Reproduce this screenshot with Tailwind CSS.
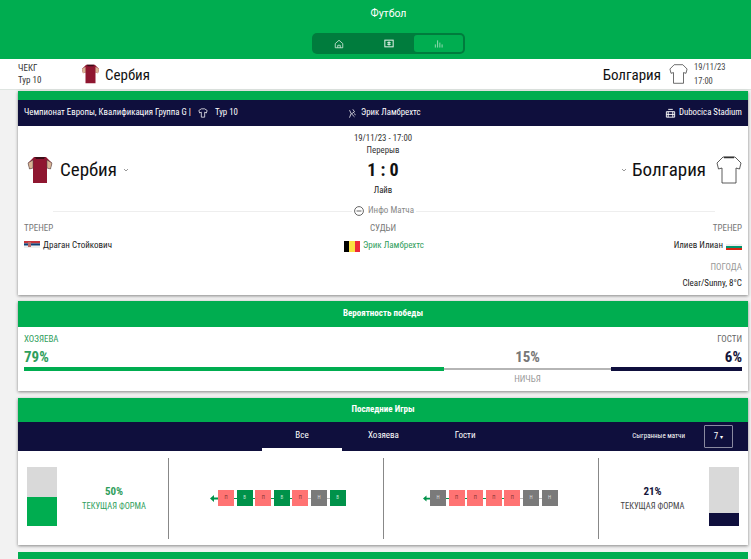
<!DOCTYPE html>
<html lang="ru">
<head>
    <meta charset="UTF-8">
    <meta name="viewport" content="width=device-width, initial-scale=1.0">
    <title>Футбол</title>
    <script src="https://cdn.jsdelivr.net/npm/@tailwindcss/browser@4"></script>
</head>
<body class="bg-[#f2f2f2] font-['Roboto',sans-serif] [font-stretch:75%] text-[#15153a] h-[559px] overflow-hidden">
    <!-- top bar -->
    <header class="bg-[#00ad50] h-[59px] flex flex-col items-center pl-[26px]">
        <div class="text-white text-[10.5px] [font-stretch:100%] leading-none mt-2 h-[25px] flex items-start pt-[1px]">Футбол</div>
        <nav class="w-[153px] h-[21px] bg-[#007c3d] rounded-[5px] flex items-center pl-[2px] pr-[2px]">
            <div class="w-[50px] flex justify-center">
                <svg width="10" height="10" viewBox="0 0 12 12" fill="none" stroke="#cfe9da" stroke-width="1"><path d="M1.5 5.5 6 1.5l4.500 4v5h-9z"/><path d="M4.500 10.500V7.500h3v3"/></svg>
            </div>
            <div class="w-[50px] flex justify-center">
                <svg width="10" height="9" viewBox="0 0 12 10" fill="none" stroke="#e3f3ea" stroke-width="1.2"><rect x="1" y="1" width="10" height="8"/><path d="M6 2.500v5M4 4h4M4 6h4"/></svg>
            </div>
            <div class="w-[49px] h-[17px] bg-[#00ad50] rounded-[3px] flex justify-center items-center">
                <svg width="9" height="9" viewBox="0 0 10 10" stroke="#9fdcb9" stroke-width="1"><path d="M1.500 9.500V6M4 9.500V1.500M6.500 9.500V4M9 9.500V6"/></svg>
            </div>
        </nav>
    </header>

    <!-- match strip -->
    <section class="bg-white h-[31px] flex items-center px-[18px] border-b border-[#dfe5e1]">
        <div class="w-[63px] text-[9px] leading-[12px] text-[#333]">
            <div>ЧЕКГ</div>
            <div>Тур 10</div>
        </div>
        <svg width="19" height="20" viewBox="0 0 26 28">
            <path d="M7 1h12l6 6-1.500 6-3.500-1v15H6V12l-3.500 1L1 7z" fill="#8f1630"/>
            <path d="M1 7l5-3v8l-3.500 1zM25 7l-5-3v8l3.500 1z" fill="#d9b596"/>
            <path d="M8 1h10l-1 2H9z" fill="#3a0d18"/>
        </svg>
        <div class="ml-[5px] pt-[2px] text-[15px] text-[#111]">Сербия</div>
        <div class="ml-auto pt-[2px] text-[15px] text-[#111]">Болгария</div>
        <svg class="ml-[8px]" width="19" height="20" viewBox="0 0 26 28" fill="#fff" stroke="#333" stroke-width="1">
            <path d="M7 1h12l6 6-1.500 6-3.500-1v15H6V12l-3.500 1L1 7z"/>
        </svg>
        <div class="ml-[6px] w-[39px] text-[8.500px] leading-[14px] text-[#444]">
            <div>19/11/23</div>
            <div>17:00</div>
        </div>
    </section>

    <main class="ml-[18px] w-[730px]">
        <!-- match card -->
        <section class="bg-white shadow-[0_1px_3px_rgba(0,0,0,0.45)] h-[204px] mt-[1px]">
            <div class="h-[9px] bg-[#00ad50]"></div>
            <div class="h-[26px] bg-[#0f0f3d] text-white text-[8.800px] flex items-center px-[6px]">
                <div class="w-[323px] flex items-center">
                    <span>Чемпионат Европы, Квалификация Группа G |</span>
                    <svg class="ml-[7px]" width="10" height="10" viewBox="0 0 12 12" fill="none" stroke="#fff" stroke-width="0.9"><path d="M4 1h4l3 2-1 3-2-1v6H4V5L2 6 1 3z"/></svg>
                    <span class="ml-[7px]">Тур 10</span>
                </div>
                <svg width="10" height="11" viewBox="0 0 12 12" fill="none" stroke="#fff" stroke-width="0.9"><path d="M3 11 5 6 3 2M5 6l4 4M7 1l2 3-3 2M9 6l1 2"/></svg>
                <span class="ml-[4px]">Эрик Ламбрехтс</span>
                <svg class="ml-auto" width="11" height="11" viewBox="0 0 12 12" fill="none" stroke="#fff" stroke-width="1"><path d="M1.500 4h9v6h-9zM1.500 7h9M3.500 1.500h5M3.500 4v6M8.500 4v6"/></svg>
                <span class="ml-[3px]">Dubocica Stadium</span>
            </div>

            <div class="relative h-[80px] flex items-center justify-between pl-[9px] pr-[6px]">
                <div class="flex items-center mt-[8px]">
                    <svg width="26" height="28" viewBox="0 0 26 28">
                        <path d="M7 1h12l6 6-1.500 6-3.500-1v15H6V12l-3.500 1L1 7z" fill="#8f1630"/>
                        <path d="M1 7l5-3v8l-3.500 1zM25 7l-5-3v8l3.500 1z" fill="#d9b596" stroke="#444" stroke-width="0.5"/>
                        <path d="M8 1h10l-1 2H9z" fill="#3a0d18"/>
                    </svg>
                    <span class="ml-[7px] text-[19px] text-[#111]">Сербия</span>
                    <svg class="ml-[6px]" width="6" height="4" viewBox="0 0 6 4" fill="none" stroke="#999"><path d="m1 1 2 2 2-2"/></svg>
                </div>
                <div class="absolute left-1/2 -translate-x-1/2 top-[6px] flex flex-col items-center whitespace-nowrap">
                    <div class="text-[8.800px] leading-[12px] text-[#333]">19/11/23 - 17:00</div>
                    <div class="text-[8.800px] leading-[12px] text-[#333]">Перерыв</div>
                    <div class="text-[18px] leading-[28px] font-bold text-[#111]">1 : 0</div>
                    <div class="text-[8.800px] leading-[12px] text-[#222]">Лайв</div>
                </div>
                <div class="flex items-center mt-[8px]">
                    <svg width="6" height="4" viewBox="0 0 6 4" fill="none" stroke="#999"><path d="m1 1 2 2 2-2"/></svg>
                    <span class="ml-[5px] text-[19px] text-[#111]">Болгария</span>
                    <svg class="ml-[10px]" width="26" height="28" viewBox="0 0 26 28" fill="#fff" stroke="#333" stroke-width="0.8">
                        <path d="M7 1h12l6 6-1.500 6-3.500-1v15H6V12l-3.500 1L1 7z"/>
                        <path d="M8 1.500h10" stroke-width="1.500"/>
                    </svg>
                </div>
            </div>

            <div class="flex items-center ml-[35px] mr-[33px] h-[10px]">
                <div class="flex-1 h-px bg-[#eeeeee]"></div>
                <svg class="mx-[2px]" width="10" height="10" viewBox="0 0 10 10" fill="none" stroke="#555" stroke-width="0.9"><circle cx="5" cy="5" r="4.400"/><path d="M2.500 5h5"/></svg>
                <span class="mx-[2px] text-[9px] text-[#888]">Инфо Матча</span>
                <div class="flex-1 h-px bg-[#eeeeee]"></div>
            </div>

            <div class="relative grid grid-cols-3 px-[6px] mt-[6px] text-[9px]">
                <div>
                    <div class="text-[#777] leading-[12px]">ТРЕНЕР</div>
                    <div class="mt-[6px] flex items-center h-[12px]">
                        <svg class="mb-[3px]" width="16" height="7" viewBox="0 0 16 7">
                            <rect width="16" height="2.400" fill="#c6363c"/>
                            <rect y="2.400" width="16" height="2.300" fill="#0c4076"/>
                            <rect y="4.700" width="16" height="2.300" fill="#eee"/>
                            <rect x="4" y="1" width="3" height="5" fill="#b86a6a"/>
                        </svg>
                        <span class="ml-[3px] text-[#222]">Драган Стойкович</span>
                    </div>
                </div>
                <div class="flex flex-col items-center">
                    <div class="text-[#777] leading-[12px]">СУДЬИ</div>
                    <div class="mt-[6px] flex items-center h-[12px] ml-[2px]">
                        <div class="w-[16px] h-[11px] flex">
                            <div class="flex-1 bg-black"></div>
                            <div class="flex-1 bg-[#fae042]"></div>
                            <div class="flex-1 bg-[#ed2939]"></div>
                        </div>
                        <span class="ml-[3px] text-[#2f9e5c]">Эрик Ламбрехтс</span>
                    </div>
                </div>
                <div class="flex flex-col items-end">
                    <div class="text-[#777] leading-[12px]">ТРЕНЕР</div>
                    <div class="mt-[6px] flex items-center h-[12px]">
                        <span class="mr-[3px] text-[#222]">Илиев Илиан</span>
                        <div class="w-[16px] h-[7px] flex flex-col mt-[2px]">
                            <div class="flex-1 bg-[#eee]"></div>
                            <div class="flex-1 bg-[#00966e]"></div>
                            <div class="flex-1 bg-[#d62612]"></div>
                        </div>
                    </div>
                    <div class="mt-[9px] text-[#999] leading-[12px]">ПОГОДА</div>
                    <div class="mt-[4px] text-[#222] leading-[12px]">Clear/Sunny, 8°C</div>
                </div>
            </div>
        </section>

        <!-- win probability -->
        <section class="bg-white shadow-[0_1px_3px_rgba(0,0,0,0.45)] h-[90px] mt-[6px]">
            <div class="h-[26px] bg-[#00ad50] text-white text-[9px] font-bold flex items-center justify-center">Вероятность победы</div>
            <div class="relative px-[6px] pt-[6px]">
                <div class="flex justify-between text-[9px] leading-[12px]">
                    <span class="text-[#2f9e5c]">ХОЗЯЕВА</span>
                    <span class="text-[#666]">ГОСТИ</span>
                </div>
                <div class="flex h-[17px] mt-[4px] text-[15px] font-bold leading-[17px]">
                    <div class="w-[420px] text-[#2f9e5c]">79%</div>
                    <div class="w-[167px] text-center text-[#777]">15%</div>
                    <div class="w-[131px] text-right text-[#15153a]">6%</div>
                </div>
                <div class="flex items-center h-[4px] mt-[1px]">
                    <div class="w-[420px] h-[4px] bg-[#00ad50]"></div>
                    <div class="w-[167px] h-[2px] bg-[#b5b5b5]"></div>
                    <div class="w-[131px] h-[4px] bg-[#0f0f3d]"></div>
                </div>
                <div class="flex mt-[2px] text-[9px] leading-[12px] text-[#999]">
                    <div class="w-[420px]"></div>
                    <div class="w-[167px] text-center">НИЧЬЯ</div>
                </div>
            </div>
        </section>

        <!-- recent form -->
        <section class="bg-white shadow-[0_1px_3px_rgba(0,0,0,0.45)] h-[147px] mt-[7px]">
            <div class="h-[24px] bg-[#00ad50] text-white text-[9px] font-bold flex items-center justify-center">Последние Игры</div>
            <div class="h-[29px] bg-[#0f0f3d] text-white flex items-start">
                <div class="ml-[244px] w-[80px] h-[29px] border-b-[3px] border-white text-center text-[9px] leading-[26px]">Все</div>
                <div class="ml-[26px] text-[9px] leading-[26px]">Хозяева</div>
                <div class="ml-[56px] text-[9px] leading-[26px]">Гости</div>
                <div class="ml-auto text-[7px] leading-[29px]">Сыгранные матчи</div>
                <div class="ml-[19px] mr-[15px] mt-[3px] w-[29px] h-[23px] border border-[#8a8aa0] rounded-[1px] flex items-center justify-center text-[9px]">7<span class="ml-[2px] text-[6px]">▾</span></div>
            </div>
            <div class="flex items-center h-[94px]">
                <div class="w-[150px] flex items-center pl-[9px]">
                    <div class="w-[30px] h-[59px] mb-[3px] bg-[#d9d9d9] flex flex-col justify-end">
                        <div class="h-[29px] bg-[#00ad50]"></div>
                    </div>
                    <div class="flex-1 text-center pl-[3px] pt-[1px]">
                        <div class="text-[11px] font-bold leading-[14px] text-[#2f9e5c]">50%</div>
                        <div class="text-[8.500px] leading-[14px] text-[#2f9e5c]">ТЕКУЩАЯ ФОРМА</div>
                    </div>
                </div>
                <div class="w-px h-[81px] bg-[#888]"></div>
                <div class="w-[214px] flex items-center pl-[41px]">
                    <svg width="8" height="7" viewBox="0 0 8 7" fill="#00924a"><path d="M0 3.500 4 0v2.500h4v2H4V7z"/></svg>
                    <div class="w-[16px] h-[16px] bg-[#ff7373] text-[#7a3030] text-[5px] flex items-center justify-center">П</div>
                    <div class="w-[2.600px] h-px bg-[#00924a]"></div>
                    <div class="w-[16px] h-[16px] bg-[#00924a] text-[#bfe6cf] text-[5px] flex items-center justify-center">В</div>
                    <div class="w-[2.600px] h-px bg-[#00924a]"></div>
                    <div class="w-[16px] h-[16px] bg-[#ff7373] text-[#7a3030] text-[5px] flex items-center justify-center">П</div>
                    <div class="w-[2.600px] h-px bg-[#00924a]"></div>
                    <div class="w-[16px] h-[16px] bg-[#00924a] text-[#bfe6cf] text-[5px] flex items-center justify-center">В</div>
                    <div class="w-[2.600px] h-px bg-[#00924a]"></div>
                    <div class="w-[16px] h-[16px] bg-[#ff7373] text-[#7a3030] text-[5px] flex items-center justify-center">П</div>
                    <div class="w-[2.600px] h-px bg-[#bbb]"></div>
                    <div class="w-[16px] h-[16px] bg-[#7a7a7a] text-[#ddd] text-[5px] flex items-center justify-center">Н</div>
                    <div class="w-[2.600px] h-px bg-[#bbb]"></div>
                    <div class="w-[16px] h-[16px] bg-[#00924a] text-[#bfe6cf] text-[5px] flex items-center justify-center">В</div>
                </div>
                <div class="w-px h-[81px] bg-[#888]"></div>
                <div class="w-[214px] flex items-center pl-[39px]">
                    <svg width="7" height="7" viewBox="0 0 8 7" fill="#00924a"><path d="M0 3.500 4 0v2.500h4v2H4V7z"/></svg>
                    <div class="w-[16px] h-[16px] bg-[#7a7a7a] text-[#ddd] text-[5px] flex items-center justify-center">Н</div>
                    <div class="w-[2.600px] h-px bg-[#00924a]"></div>
                    <div class="w-[16px] h-[16px] bg-[#ff7373] text-[#7a3030] text-[5px] flex items-center justify-center">П</div>
                    <div class="w-[2.600px] h-px bg-[#00924a]"></div>
                    <div class="w-[16px] h-[16px] bg-[#ff7373] text-[#7a3030] text-[5px] flex items-center justify-center">П</div>
                    <div class="w-[2.600px] h-px bg-[#00924a]"></div>
                    <div class="w-[16px] h-[16px] bg-[#ff7373] text-[#7a3030] text-[5px] flex items-center justify-center">П</div>
                    <div class="w-[2.600px] h-px bg-[#00924a]"></div>
                    <div class="w-[16px] h-[16px] bg-[#ff7373] text-[#7a3030] text-[5px] flex items-center justify-center">П</div>
                    <div class="w-[2.600px] h-px bg-[#bbb]"></div>
                    <div class="w-[16px] h-[16px] bg-[#7a7a7a] text-[#ddd] text-[5px] flex items-center justify-center">Н</div>
                    <div class="w-[2.600px] h-px bg-[#bbb]"></div>
                    <div class="w-[16px] h-[16px] bg-[#7a7a7a] text-[#ddd] text-[5px] flex items-center justify-center">Н</div>
                </div>
                <div class="w-px h-[81px] bg-[#888]"></div>
                <div class="flex-1 flex items-center pr-[9px]">
                    <div class="flex-1 text-center pt-[1px] pr-[3px]">
                        <div class="text-[11px] font-bold leading-[14px] text-[#15153a]">21%</div>
                        <div class="text-[8.500px] leading-[14px] text-[#444]">ТЕКУЩАЯ ФОРМА</div>
                    </div>
                    <div class="w-[30px] h-[59px] mb-[3px] bg-[#d9d9d9] flex flex-col justify-end">
                        <div class="h-[13px] bg-[#0f0f3d]"></div>
                    </div>
                </div>
            </div>
        </section>

        <div class="h-[7px] mt-[7px] bg-[#00ad50]"></div>
    </main>
</body>
</html>
